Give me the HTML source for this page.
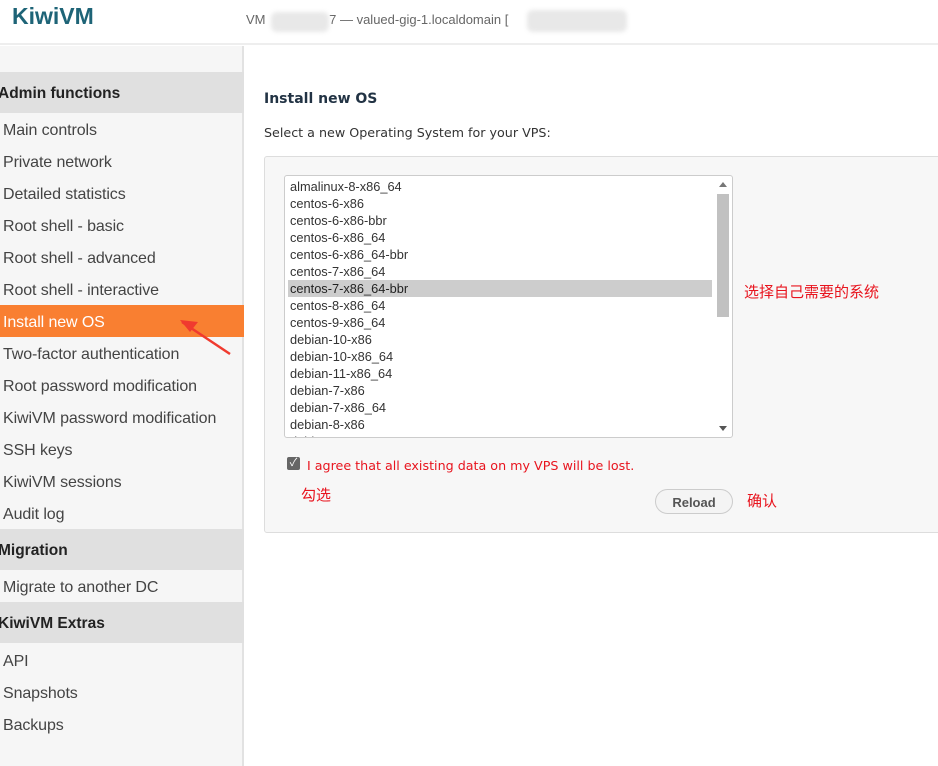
<!DOCTYPE html>
<html><head><meta charset="utf-8"><style>
*{margin:0;padding:0;box-sizing:border-box}
body{width:938px;height:766px;overflow:hidden;background:#fff;font-family:"Liberation Sans","Noto Sans CJK SC",sans-serif;position:relative;color:#333}
.hdr{position:absolute;left:0;top:0;width:938px;height:45px;border-bottom:2px solid #eee;background:#fff}
.logo{position:absolute;left:12px;top:3px;font-size:23px;font-weight:bold;color:#1e6477}
.vm{position:absolute;left:246px;top:12px;font-size:13px;color:#666}
.blur{position:absolute;background:#e8e8e8;border-radius:6px;filter:blur(2px)}
.side{position:absolute;left:0;top:46px;width:244px;height:720px;background:#f6f6f6;border-right:2px solid #e2e2e2}
.sec{position:absolute;left:0;width:244px;height:41px;background:#e0e0e0;font-weight:bold;font-size:15.5px;color:#222;line-height:43px;text-indent:-2px}
.it{position:absolute;left:0;width:244px;height:32px;line-height:35px;font-size:16px;color:#444;padding-left:3px;letter-spacing:-0.1px}
.act{background:#f97f31;color:#fff}
.dv{font-family:"DejaVu Sans","Noto Sans CJK SC",sans-serif}
h2{position:absolute;left:264px;top:91px;font-size:14px;color:#223344;font-weight:bold}
.sub{position:absolute;left:264px;top:125px;font-size:12.7px;color:#333}
.box{position:absolute;left:264px;top:156px;width:680px;height:377px;background:#f7f7f7;border:1px solid #ddd;border-radius:3px}
.list{position:absolute;left:284px;top:175px;width:449px;height:263px;background:#fff;border:1px solid #ccc;border-radius:3px;overflow:hidden}
.opt{height:17px;line-height:17px;font-size:12.8px;color:#333;padding-left:2px;margin:0 20px 0 3px}
.sel{background:#cdcdcd;color:#222}
.sb{position:absolute;right:2px;top:0;width:14px;height:261px}
.thumb{position:absolute;left:1px;top:18px;width:12px;height:123px;background:#c1c1c1}
.red{color:#e8141e}
.btn{position:absolute;left:655px;top:489px;width:78px;height:25px;border:1px solid #ccc;border-radius:13px;background:#f4f4f4;font-size:13px;font-weight:bold;color:#555;text-align:center;line-height:25px}
</style></head><body>
<div class="hdr"><div class="logo">KiwiVM</div>
<div class="vm">VM <span style="display:inline-block;width:60px"></span>7 — valued-gig-1.localdomain [</div>
<div class="blur" style="left:271px;top:12px;width:58px;height:20px"></div>
<div class="blur" style="left:527px;top:10px;width:100px;height:22px"></div>
</div>
<div class="side">
<div class="sec" style="top:26px">Admin functions</div>
<div class="it" style="top:67px">Main controls</div>
<div class="it" style="top:99px">Private network</div>
<div class="it" style="top:131px">Detailed statistics</div>
<div class="it" style="top:163px">Root shell - basic</div>
<div class="it" style="top:195px">Root shell - advanced</div>
<div class="it" style="top:227px">Root shell - interactive</div>
<div class="it act" style="top:259px">Install new OS</div>
<div class="it" style="top:291px">Two-factor authentication</div>
<div class="it" style="top:323px">Root password modification</div>
<div class="it" style="top:355px">KiwiVM password modification</div>
<div class="it" style="top:387px">SSH keys</div>
<div class="it" style="top:419px">KiwiVM sessions</div>
<div class="it" style="top:451px">Audit log</div>
<div class="sec" style="top:483px">Migration</div>
<div class="it" style="top:524px">Migrate to another DC</div>
<div class="sec" style="top:556px">KiwiVM Extras</div>
<div class="it" style="top:598px">API</div>
<div class="it" style="top:630px">Snapshots</div>
<div class="it" style="top:662px">Backups</div>
</div>
<svg style="position:absolute;left:178px;top:316px" width="56" height="40"><path d="M4 6 L52 38" stroke="#f03a2f" stroke-width="2.5"/><path d="M2 4 L20 6 L12 16 Z" fill="#f03a2f"/></svg>
<h2 class="dv">Install new OS</h2>
<div class="sub dv">Select a new Operating System for your VPS:</div>
<div class="box"></div>
<div class="list">
<div style="height:2px"></div>
<div class="opt">almalinux-8-x86_64</div>
<div class="opt">centos-6-x86</div>
<div class="opt">centos-6-x86-bbr</div>
<div class="opt">centos-6-x86_64</div>
<div class="opt">centos-6-x86_64-bbr</div>
<div class="opt">centos-7-x86_64</div>
<div class="opt sel">centos-7-x86_64-bbr</div>
<div class="opt">centos-8-x86_64</div>
<div class="opt">centos-9-x86_64</div>
<div class="opt">debian-10-x86</div>
<div class="opt">debian-10-x86_64</div>
<div class="opt">debian-11-x86_64</div>
<div class="opt">debian-7-x86</div>
<div class="opt">debian-7-x86_64</div>
<div class="opt">debian-8-x86</div>
<div class="opt">debian-8-x86_64</div>
<div class="sb"><div style="position:absolute;left:3px;top:6px;border:4px solid transparent;border-bottom:5px solid #777;border-top:0"></div><div class="thumb"></div><div style="position:absolute;left:3px;top:250px;border:4px solid transparent;border-top:5px solid #555;border-bottom:0"></div></div>
</div>
<div style="position:absolute;left:287px;top:457px;width:13px;height:13px;background:#666;border-radius:2px;color:#fff;font-size:11px;line-height:13px;text-align:center">✓</div>
<div class="red dv" style="position:absolute;left:307px;top:458px;font-size:12.7px">I agree that all existing data on my VPS will be lost.</div>
<div class="red" style="position:absolute;left:301px;top:484px;font-size:15px">勾选</div>
<div class="btn">Reload</div>
<div class="red" style="position:absolute;left:747px;top:490px;font-size:15px">确认</div>
<div class="red" style="position:absolute;left:744px;top:281px;font-size:15px">选择自己需要的系统</div>
</body></html>
